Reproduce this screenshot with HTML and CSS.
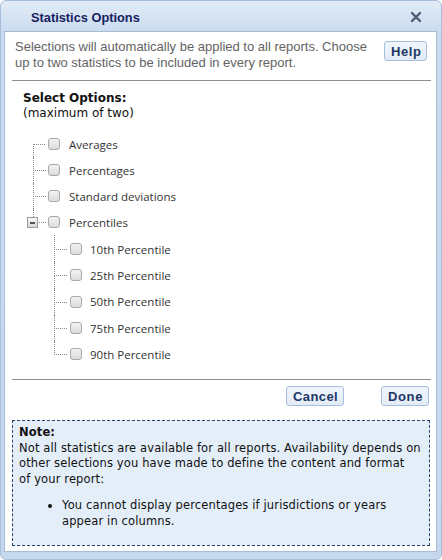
FILE: index.html
```html
<!DOCTYPE html>
<html>
<head>
<meta charset="utf-8">
<title>Statistics Options</title>
<link rel="stylesheet" href="styles.css">
</head>
<body>
<div class="window">
  <div class="titlebar">
    <span class="title">Statistics Options</span>
    <span class="close" aria-label="Close">
      <svg width="12" height="12" viewBox="0 0 12 12"><path d="M2 2 L10 10 M10 2 L2 10" stroke="#4d5b73" stroke-width="2.4" stroke-linecap="round"/></svg>
    </span>
  </div>
  <div class="panel">
    <div class="intro">
      <p>Selections will automatically be applied to all reports. Choose up to two statistics to be included in every report.</p>
      <button class="btn help">Help</button>
    </div>
    <div class="rule"></div>
    <div class="options">
      <div class="opt-head"><strong>Select Options:</strong><br>(maximum of two)</div>
      <ul class="tree">
        <li class="node"><div class="row"><span class="cb"></span><span class="lbl">Averages</span></div></li>
        <li class="node"><div class="row"><span class="cb"></span><span class="lbl">Percentages</span></div></li>
        <li class="node"><div class="row"><span class="cb"></span><span class="lbl">Standard deviations</span></div></li>
        <li class="node open">
          <span class="toggle"></span>
          <div class="row"><span class="cb"></span><span class="lbl">Percentiles</span></div>
          <ul class="sub">
            <li class="node"><div class="row"><span class="cb"></span><span class="lbl">10th Percentile</span></div></li>
            <li class="node"><div class="row"><span class="cb"></span><span class="lbl">25th Percentile</span></div></li>
            <li class="node"><div class="row"><span class="cb"></span><span class="lbl">50th Percentile</span></div></li>
            <li class="node"><div class="row"><span class="cb"></span><span class="lbl">75th Percentile</span></div></li>
            <li class="node"><div class="row"><span class="cb"></span><span class="lbl">90th Percentile</span></div></li>
          </ul>
        </li>
      </ul>
    </div>
    <div class="rule bottom"></div>
    <div class="actions">
      <button class="btn">Cancel</button>
      <button class="btn">Done</button>
    </div>
    <div class="note">
      <strong>Note:</strong><br>
      Not all statistics are available for all reports. Availability depends on<br>
      other selections you have made to define the content and format<br>
      of your report:
      <ul>
        <li>You cannot display percentages if jurisdictions or years appear in columns.</li>
      </ul>
    </div>
  </div>
</div>
</body>
</html>
```
FILE: styles.css
```css
* { box-sizing: border-box; }
html, body { margin: 0; padding: 0; }
body { width: 442px; height: 560px; background: #fff; }

.window {
  width: 442px;
  height: 560px;
  display: flex;
  flex-direction: column;
  border: 1px solid #a7bedc;
  border-radius: 6px;
  background: linear-gradient(#e2ebf6 0px, #cbdcf0 30px, #c6d8ee 100%);
  padding: 0 4px 7px 3px;
}

.titlebar {
  height: 30px;
  display: flex;
  align-items: center;
  justify-content: space-between;
  padding: 2px 15px 0 27px;
}
.title {
  font-family: "Liberation Sans", Arial, sans-serif;
  font-weight: bold;
  font-size: 12.8px;
  color: #17215f;
}
.close { display: flex; width: 12px; height: 12px; }

.panel {
  flex: 1;
  background: #fff;
  border: 1px solid #a9bcd6;
  display: flex;
  flex-direction: column;
}

.intro {
  display: flex;
  align-items: flex-start;
  gap: 7px;
  padding: 7px 9px 0 10px;
}
.intro p {
  flex: 1;
  margin: 0;
  font-family: "Liberation Sans", Arial, sans-serif;
  font-size: 13px;
  line-height: 16px;
  color: #636363;
}

.btn {
  font-family: "Liberation Sans", Arial, sans-serif;
  font-weight: bold;
  font-size: 13px;
  line-height: 15px;
  letter-spacing: 0.6px;
  color: #213766;
  background: linear-gradient(#f1f6fc, #e2ebf6);
  border: 1px solid #a6bfdd;
  border-radius: 3px;
  padding: 1px 5px 1px 6px;
  height: 20px;
}
.help { margin-top: 2px; width: 43px; }

.rule {
  height: 1px;
  background: #8f8f8f;
  margin: 9px 5px 0 7px;
}
.rule.bottom { margin-top: 12px; }

.options { padding: 0 0 0 18px; }
.opt-head {
  margin-top: 10px;
  font-family: "DejaVu Sans", Verdana, sans-serif;
  font-size: 12px;
  line-height: 15px;
  color: #111;
}

.tree, .tree ul {
  list-style: none;
  margin: 0;
  padding: 0;
}
.tree {
  margin-top: 10px;
  margin-left: 10px;
}
.tree .sub { margin-left: 21px; padding-top: 1px; }

.node { position: relative; }
.node::before {
  content: "";
  position: absolute;
  left: 0;
  top: 0;
  width: 12px;
  height: 13px;
  border-left: 1px dotted #8a8a8a;
  border-bottom: 1px dotted #8a8a8a;
}
.node::after {
  content: "";
  position: absolute;
  left: 0;
  top: 13px;
  bottom: 0;
  border-left: 1px dotted #8a8a8a;
}
.sub .node:first-child::before { top: -1px; height: 14px; }
.node:last-child::after { display: none; }
.tree > .node:first-child::before { border-left: none; }

.row {
  display: flex;
  align-items: center;
  height: 26px;
  padding-left: 15px;
}
.sub .row { height: 26.3px; padding-left: 16px; }
.cb {
  width: 12px;
  height: 12px;
  border: 1px solid #a9a9a9;
  border-radius: 3px;
  background: linear-gradient(#f2f2f2, #dcdcdc);
  flex: none;
}
.lbl {
  margin-left: 9px;
  font-family: "Open Sans", "Segoe UI", sans-serif;
  font-size: 11.5px;
  color: #333;
}
.sub .lbl { margin-left: 8px; }

.toggle {
  position: absolute;
  left: -6px;
  top: 8px;
  width: 11px;
  height: 11px;
  border: 1px solid #9c9c9c;
  background: linear-gradient(#fafafa, #d6d6d6);
  z-index: 1;
  display: flex;
  align-items: center;
  justify-content: center;
}
.toggle::before {
  content: "";
  width: 5px;
  height: 2px;
  background: #555;
}

.actions {
  display: flex;
  justify-content: flex-end;
  gap: 37px;
  margin: 6px 7px 0 0;
}
.actions .btn:first-child { letter-spacing: 0.4px; }

.note {
  margin: 14px 6px 0 7px;
  border: 1px dashed #27456f;
  background: #e4eef9;
  padding: 4px 6px 16px 6px;
  font-family: "DejaVu Sans", Verdana, sans-serif;
  font-size: 11.5px;
  line-height: 15.5px;
  letter-spacing: 0.13px;
  color: #111;
  white-space: nowrap;
}
.note ul {
  margin: 11px 0 0 0;
  padding-left: 43px;
  white-space: normal;
}
```
